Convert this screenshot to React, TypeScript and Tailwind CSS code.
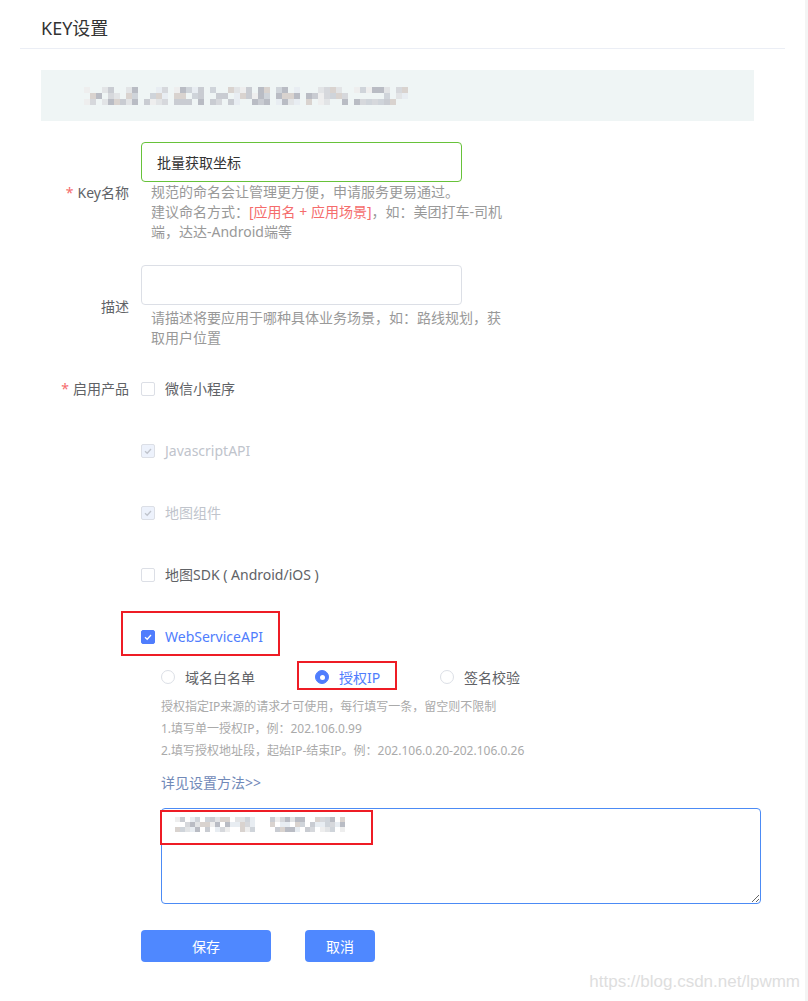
import React from 'react'

const palette = ['#c9ccd2', '#d6d8dc', '#e2e4e6', '#b9bcc4', '#d9d3cf', '#e8edf2', '#cfd4da', '#eeeeee']

function rng(seed: number) {
    let s = seed
    return () => {
        s = (s * 9301 + 49297) % 233280
        return s / 233280
    }
}

// pixelated (redacted) text
function Mosaic({ w, h, cell, seed, holes = [] }: { w: number; h: number; cell: number; seed: number; holes?: number[] }) {
    const r = rng(seed)
    const cols = Math.floor(w / cell)
    const rows = Math.floor(h / cell)
    const rects: React.ReactNode[] = []
    for (let c = 0; c < cols; c++) {
        if (holes.includes(c)) continue
        for (let y = 0; y < rows; y++) {
            const v = r()
            if (v < 0.25) continue
            rects.push(<rect key={c + '-' + y} x={c * cell} y={y * cell} width={cell} height={cell} fill={palette[Math.floor(r() * palette.length)]} />)
        }
    }
    return <svg width={w} height={h} className="block">{rects}</svg>
}

function Check({ state }: { state: 'off' | 'disabled' | 'on' }) {
    const cls = state === 'on'
        ? 'bg-[#4f7dfd] border-[#4f7dfd]'
        : state === 'disabled' ? 'bg-[#edf2fc] border-[#dcdfe6]' : 'bg-white border-[#dcdfe6]'
    return (
        <span className={`flex w-[14px] h-[14px] shrink-0 border rounded-[2px] items-center justify-center ${cls}`}>
            {state !== 'off' && (
                <svg width="10" height="10" viewBox="0 0 10 10">
                    <path d="M2 5.2 L4.2 7.3 L8 3" fill="none" stroke={state === 'on' ? '#fff' : '#c0c4cc'} strokeWidth="1.3" />
                </svg>
            )}
        </span>
    )
}

function Radio({ on }: { on?: boolean }) {
    return (
        <span className={`flex w-[14px] h-[14px] shrink-0 rounded-full border items-center justify-center ${on ? 'bg-[#4f7dfd] border-[#4f7dfd]' : 'bg-white border-[#dcdfe6]'}`}>
            {on && <span className="w-[5px] h-[5px] rounded-full bg-white" />}
        </span>
    )
}

function ProductRow({ state, label }: { state: 'off' | 'disabled' | 'on'; label: string }) {
    const color = state === 'disabled' ? 'text-[#c0c4cc]' : state === 'on' ? 'text-[#4f7dfd]' : 'text-[#606266]'
    return (
        <div className="flex items-center h-[20px] gap-[10px]">
            <Check state={state} />
            <span className={`text-[14px] leading-[20px] ${color}`}>{label}</span>
        </div>
    )
}

export default function App() {
    return (
        <div className="flex w-[808px] min-h-[1001px] bg-white font-['Noto_Sans','Noto_Sans_CJK_SC',sans-serif]">
            <div className="w-[805px] flex flex-col">
                <div className="mx-[20px] h-[49px] border-b border-[#ebeef5] pl-[21px] pt-[17px]">
                    <div className="text-[18px] leading-[22px] text-[#333]">KEY设置</div>
                </div>

                <div className="mt-[21px] ml-[41px] w-[713px] h-[51px] bg-[#eff5f5] flex items-center pl-[43px]">
                    <Mosaic w={328} h={18} cell={6} seed={17} holes={[9, 14, 20, 31, 36, 44]} />
                </div>

                {/* Key名称 */}
                <div className="mt-[21px] flex items-center">
                    <div className="w-[129px] text-right text-[14px] text-[#606266]">
                        <span className="text-[#f56c6c] mr-[4px]">*</span>Key名称
                    </div>
                    <div className="ml-[12px] flex flex-col">
                        <div className="w-[321px] h-[40px] border border-[#67c23a] rounded-[4px] pl-[15px] flex items-center text-[14px] text-[#333]">
                            批量获取坐标
                        </div>
                        <div className="pl-[10px] text-[14px] leading-[20px] text-[#999] whitespace-nowrap">
                            规范的命名会让管理更方便，申请服务更易通过。<br />
                            建议命名方式：<span className="text-[#f56c6c]">[应用名 + 应用场景]</span>，如：美团打车-司机<br />
                            端，达达-Android端等
                        </div>
                    </div>
                </div>

                {/* 描述 */}
                <div className="mt-[23px] flex items-center">
                    <div className="w-[129px] text-right text-[14px] text-[#606266]">描述</div>
                    <div className="ml-[12px] flex flex-col">
                        <div className="w-[321px] h-[40px] border border-[#dcdfe6] rounded-[4px]" />
                        <div className="mt-[3px] pl-[10px] text-[14px] leading-[20px] text-[#999] whitespace-nowrap">
                            请描述将要应用于哪种具体业务场景，如：路线规划，获<br />
                            取用户位置
                        </div>
                    </div>
                </div>

                {/* 启用产品 */}
                <div className="mt-[31px] flex items-start">
                    <div className="w-[129px] h-[20px] leading-[20px] text-right text-[14px] text-[#606266]">
                        <span className="text-[#f56c6c] mr-[4px]">*</span>启用产品
                    </div>
                    <div className="ml-[12px] flex flex-col">
                        <div className="flex flex-col gap-[42px]">
                            <ProductRow state="off" label="微信小程序" />
                            <ProductRow state="disabled" label="JavascriptAPI" />
                            <ProductRow state="disabled" label="地图组件" />
                            <ProductRow state="off" label="地图SDK ( Android/iOS )" />
                            <div className="relative">
                                <ProductRow state="on" label="WebServiceAPI" />
                                <span className="absolute -left-[20px] -top-[16px] w-[159px] h-[45px] border-2 border-[#ee1c25]" />
                            </div>
                        </div>

                        <div className="pl-[20px] mt-[20px] flex flex-col">
                            <div className="flex items-center h-[20px] text-[14px]">
                                <div className="w-[154px] flex items-center gap-[10px]">
                                    <Radio />
                                    <span className="text-[#606266]">域名白名单</span>
                                </div>
                                <div className="relative w-[125px] flex items-center gap-[10px]">
                                    <Radio on />
                                    <span className="text-[#4f7dfd]">授权IP</span>
                                    <span className="absolute -left-[18px] -top-[6px] w-[100px] h-[29px] border-2 border-[#ee1c25]" />
                                </div>
                                <div className="flex items-center gap-[10px]">
                                    <Radio />
                                    <span className="text-[#606266]">签名校验</span>
                                </div>
                            </div>

                            <div className="mt-[9px] text-[12px] leading-[22px] text-[#aaa] whitespace-nowrap">
                                <div>授权指定IP来源的请求才可使用，每行填写一条，留空则不限制</div>
                                <div>1.填写单一授权IP，例：202.106.0.99</div>
                                <div>2.填写授权地址段，起始IP-结束IP。例：202.106.0.20-202.106.0.26</div>
                            </div>

                            <div className="mt-[11px] text-[14px] leading-[20px] text-[#7189b8]">详见设置方法&gt;&gt;</div>

                            <div className="relative mt-[15px] w-[600px] h-[96px]">
                                <textarea readOnly className="block w-[600px] h-[96px] border border-[#4c8bf5] rounded-[4px] outline-none" />
                                <div className="absolute left-[14px] top-[9px]">
                                    <Mosaic w={170} h={16} cell={5} seed={41} holes={[16, 17, 18]} />
                                </div>
                                <span className="absolute -left-[1px] top-[2px] w-[213px] h-[35px] border-2 border-[#ee1c25]" />
                            </div>
                        </div>

                        <div className="mt-[26px] flex gap-[34px]">
                            <button className="w-[130px] h-[32px] rounded-[4px] bg-[#4f88ff] text-white text-[14px]">保存</button>
                            <button className="w-[70px] h-[32px] rounded-[4px] bg-[#4f88ff] text-white text-[14px]">取消</button>
                        </div>
                    </div>
                </div>

                <div className="mt-[10px] pr-[5px] text-right text-[17px] leading-[20px] text-[#dedede] font-['Liberation_Sans',sans-serif]">
                    https://blog.csdn.net/lpwmm
                </div>
            </div>
            <div className="w-[3px] bg-[#f4f4f4]" />
        </div>
    )
}
